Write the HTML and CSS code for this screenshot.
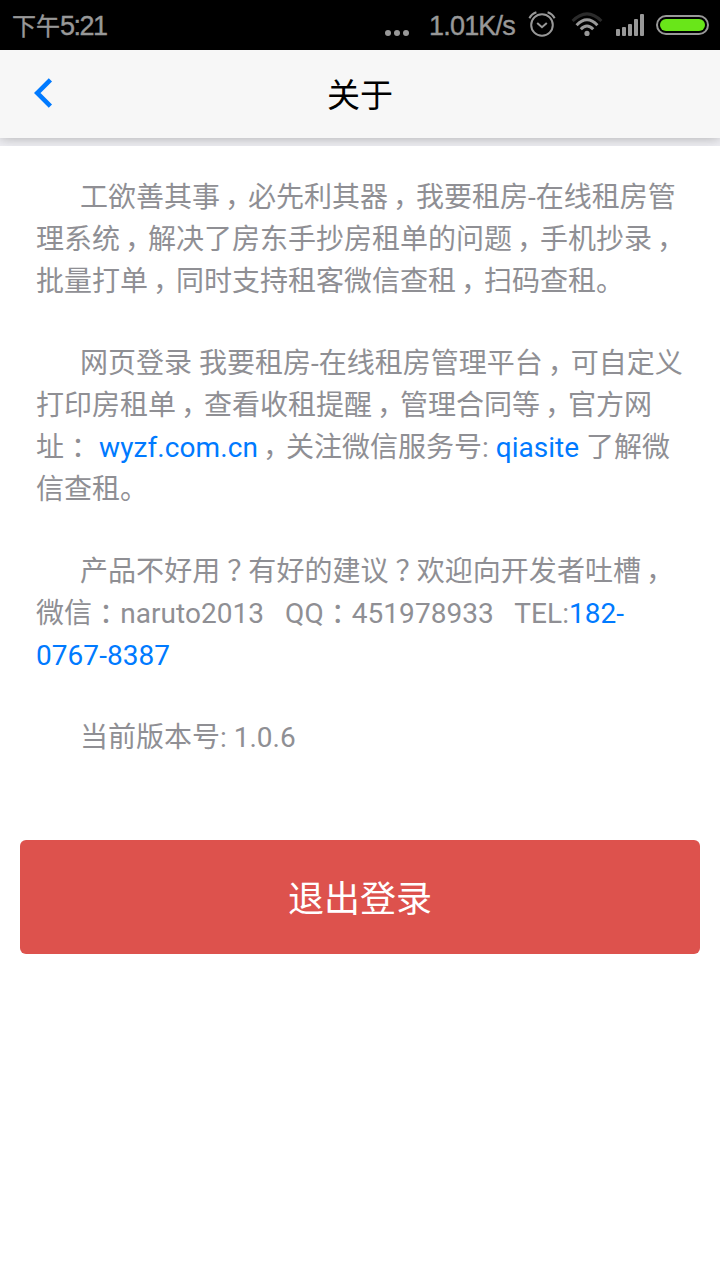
FILE: index.html
```
<!DOCTYPE html>
<html lang="zh-CN">
<head>
  <meta charset="UTF-8">
  <meta name="viewport" content="width=device-width, initial-scale=1.0">
  <title>关于</title>
  <link rel="stylesheet" href="styles.css">
</head>
<body>
  <div class="status-bar">
    <span class="time">下午<span class="clock">5:21</span></span>
    <div class="status-right">
      <svg class="dots" width="24" height="6" viewBox="0 0 24 6" fill="#989898">
        <circle cx="3" cy="3" r="3"/><circle cx="12" cy="3" r="3"/><circle cx="21" cy="3" r="3"/>
      </svg>
      <span class="speed">1.01K/s</span>
      <svg class="alarm" width="28" height="28" viewBox="0 0 28 28" fill="none" stroke="#989898" stroke-width="2">
        <circle cx="14" cy="15" r="10.8"/>
        <path d="M9.2 13l4.8 4.2 4.8-4.2"/>
        <path d="M1.4 8.2Q3.6 3.8 8.4 2.2M26.6 8.2Q24.4 3.8 19.6 2.2"/>
      </svg>
      <svg class="wifi" width="32" height="26" viewBox="0 0 32 26" fill="none" stroke="#989898" stroke-width="3">
        <path d="M1.6 10Q16-4.4 30.4 10" stroke="#2b2b2b"/>
        <path d="M5.6 14.2Q16 3.4 26.4 14.2"/>
        <path d="M9.8 18.2Q16 11.8 22.2 18.2"/>
        <circle cx="16" cy="22.4" r="2.6" fill="#989898" stroke="none"/>
      </svg>
      <svg class="signal" width="28" height="22" viewBox="0 0 28 22" fill="#989898">
        <rect x="0" y="15" width="4" height="7" rx="1"/>
        <rect x="6" y="13" width="4" height="9" rx="1"/>
        <rect x="12" y="10" width="4" height="12" rx="1"/>
        <rect x="18" y="5" width="4" height="17" rx="1"/>
        <rect x="24" y="0" width="4" height="22" rx="1"/>
      </svg>
      <div class="battery"><div class="battery-level"></div></div>
    </div>
  </div>

  <header class="bar-nav">
    <a class="back" href="#" aria-label="返回">
      <svg width="20" height="30" viewBox="0 0 20 30" fill="none" stroke="#007aff" stroke-width="4.6">
        <path d="M16.4 1.9L3.2 15l13.2 13.1"/>
      </svg>
    </a>
    <h1 class="title">关于</h1>
  </header>

  <main class="content">
    <p>工欲善其事<span class="comma">，</span>必先利其器<span class="comma">，</span>我要租房-在线租房管理系统<span class="comma">，</span>解决了房东手抄房租单的问题<span class="comma">，</span>手机抄录<span class="comma">，</span>批量打单<span class="comma">，</span>同时支持租客微信查租<span class="comma">，</span>扫码查租。</p>
    <p>网页登录 我要租房-在线租房管理平台<span class="comma">，</span>可自定义打印房租单<span class="comma">，</span>查看收租提醒<span class="comma">，</span>管理合同等<span class="comma">，</span>官方网址<span class="mark">：</span> <a class="site" href="#">wyzf.com.cn</a><span class="comma">，</span>关注微信服务号: <a href="#">qiasite</a> 了解微信查租。</p>
    <p class="contact">产品不好用<span class="mark">？</span>有好的建议<span class="mark">？</span>欢迎向开发者吐槽<span class="comma">，</span>微信<span class="mark">：</span>naruto2013&nbsp;&nbsp; QQ<span class="mark">：</span>451978933&nbsp;&nbsp; TEL:<a href="#">182-0767-8387</a></p>
    <p>当前版本号: 1.0.6</p>
    <button class="btn-logout" type="button">退出登录</button>
  </main>
</body>
</html>
```

FILE: styles.css
```
* {
  box-sizing: border-box;
}
body {
  margin: 0;
  min-height: 1280px;
  display: flex;
  flex-direction: column;
  background-color: #efeff4;
  font-family: Roboto, "Noto Sans CJK SC", sans-serif;
}
a {
  color: #007aff;
  text-decoration: none;
}
svg {
  display: block;
}

/* status bar */
.status-bar {
  height: 50px;
  display: flex;
  justify-content: space-between;
  padding: 0 11px 0 12px;
  background-color: #000;
  color: #989898;
  font-family: "Liberation Sans", "Noto Sans CJK SC", sans-serif;
  font-size: 27px;
  line-height: 52px;
  -webkit-text-stroke: 0.4px #989898;
}
.time {
  font-size: 24px;
}
.clock {
  font-size: 27px;
  letter-spacing: -1.5px;
}
.status-right {
  display: flex;
  align-items: flex-start;
}
.dots {
  margin: 30px 20px 0 0;
}
.speed {
  width: 88px;
  margin-right: 11px;
  letter-spacing: -0.8px;
  white-space: nowrap;
}
.alarm {
  margin: 10px 15px 0 0;
}
.wifi {
  margin: 11px 13px 0 0;
}
.signal {
  margin: 14px 12px 0 0;
}
.battery {
  width: 53px;
  height: 20px;
  margin-top: 15px;
  padding: 2px;
  border: 2px solid #989898;
  border-radius: 10px;
}
.battery-level {
  height: 12px;
  border-radius: 6px;
  background-color: #69e619;
}

/* nav bar */
.bar-nav {
  height: 88px;
  display: grid;
  grid-template-columns: 88px 1fr 88px;
  align-items: center;
  background-color: #f7f7f7;
  box-shadow: 0 0 12px #aaa;
  clip-path: inset(0 0 -8px 0);
}
.back {
  padding: 0 0 2px 34px;
}
.title {
  margin: 0;
  padding-top: 4px;
  font-size: 33px;
  font-weight: 400;
  line-height: 84px;
  text-align: center;
}

/* page */
.content {
  flex: 1;
  margin-top: 8px;
  padding: 31px 20px;
  background-color: #fff;
}
.content p {
  margin: 0 16px 40px;
  color: #8f8f94;
  font-size: 28px;
  line-height: 42px;
  text-indent: 44px;
}
.content .contact {
  letter-spacing: 0.05px;
}
.site {
  letter-spacing: 0.1px;
}
/* half-width glyphs centred in a full-width cell */
.mark {
  margin: 0 7px;
  font-feature-settings: "halt";
}
.comma {
  margin: 0 9px 0 5px;
  font-feature-settings: "halt";
}
.btn-logout {
  display: block;
  width: 100%;
  height: 114px;
  margin-top: 81px;
  padding: 0 0 2px;
  border: 0;
  border-radius: 6px;
  background-color: #dd524d;
  color: #fff;
  font-family: inherit;
  font-size: 36px;
}
```
